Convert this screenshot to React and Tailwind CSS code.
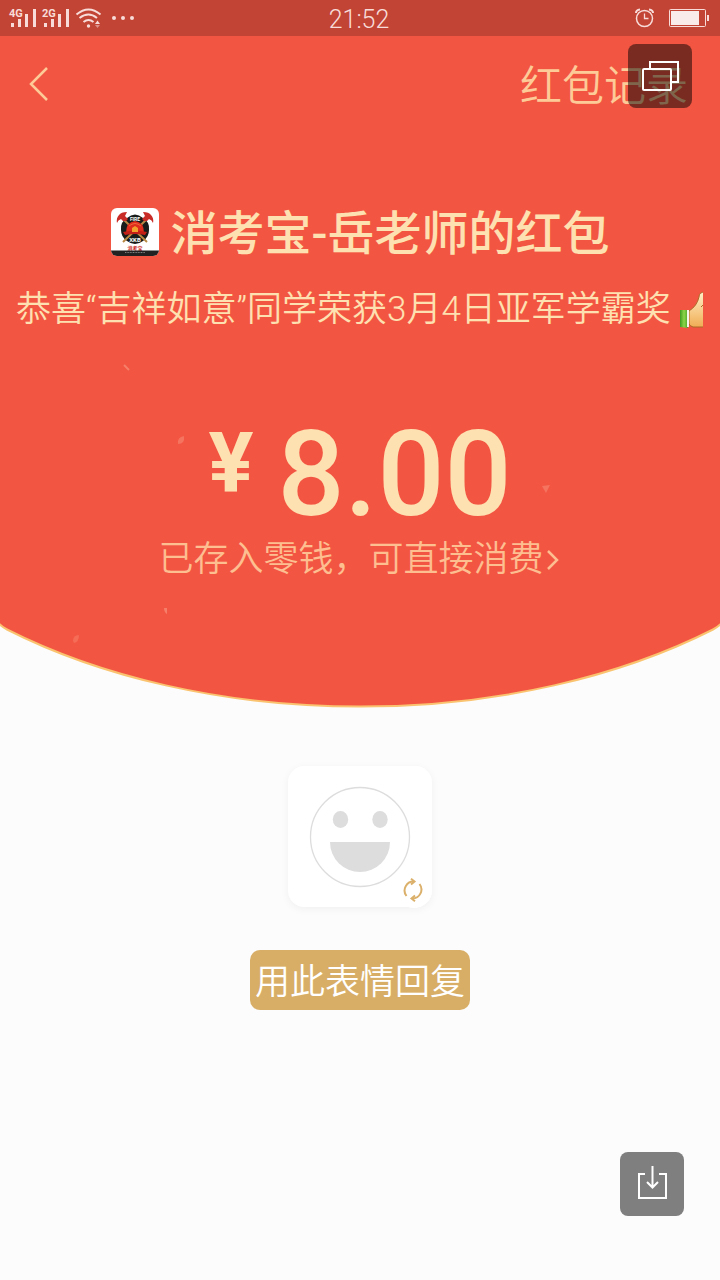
import React from "react";

const StatusBar = () => {
  return (
    <div className="grid h-9 grid-cols-3 items-center bg-[#c24435] pr-2.5 pl-2 text-[#f8dcd9]">
      <div className="flex items-center">
        <svg width="128" height="24" viewBox="8 6 128 24" fill="currentColor" aria-hidden="true">
          <text x="9" y="17" fontSize="11" fontWeight="700">4G</text>
          <path d="M11 23h3v4h-3zM18 19h3v8h-3zM25 14h3v13h-3zM33 9h3v18h-3z" />
          <text x="42" y="17" fontSize="11" fontWeight="700">2G</text>
          <path d="M44 23h3v4h-3zM51 19h3v8h-3zM58 14h3v13h-3zM66 9h3v18h-3z" />
          <g fill="none" stroke="currentColor" strokeWidth="2">
            <path d="M76.500 14.500Q88.500 4.500 100.500 14.500" />
            <path d="M79.500 18Q88.500 11 97 18" />
            <path d="M83.500 22Q88.500 18 93.500 22" />
          </g>
          <circle cx="88.500" cy="26" r="1.700" />
          <path d="M95 24l2.500-3.500 2.500 3.500z" />
          <path d="M95 25l2.500 3 2.500-3z" opacity=".5" />
          <circle cx="114" cy="18" r="2" />
          <circle cx="123" cy="18" r="2" />
          <circle cx="132" cy="18" r="2" />
        </svg>
      </div>
      <time className="pt-1 text-center text-[25px] leading-8 font-light">21:52</time>
      <div className="flex items-center justify-end">
        <svg width="76" height="24" viewBox="634 6 76 24" fill="none" stroke="currentColor" aria-hidden="true">
          <circle cx="644.500" cy="18.500" r="8" strokeWidth="1.500" />
          <path d="M644.500 13.500v5h4" strokeWidth="1.300" />
          <path d="M636 13q0-3 4-3.500M653 13q0-3-4-3.500" strokeWidth="2" />
          <rect x="669.500" y="9.500" width="36" height="17" rx="1" />
          <path d="M671 11h28v14h-28z" fill="#f8ebe9" stroke="none" />
          <path d="M707 15h2v6h-2z" fill="currentColor" stroke="none" />
        </svg>
      </div>
    </div>
  );
};

const Avatar = () => {
  return (
    <svg className="h-12 w-12 shrink-0 rounded-md bg-white" viewBox="0 0 48 48" role="img" aria-label="消考宝">
      <path d="M16 10Q24 3 32 10Q39 14 38 22Q38 29 32 33Q24 39 16 33Q10 29 10 22Q9 14 16 10Z" fill="#181c1a" />
      <path d="M12 11L36 34M36 11L12 34" stroke="#b98a45" strokeWidth="2" />
      <path d="M12 13L10 11Q7 12 6 15Q5 10 8 7Q10 4 16 4L14 8L17 11L15 13ZM36 13L38 11Q41 12 42 15Q43 10 40 7Q38 4 32 4L34 8L31 11L33 13Z" fill="#c92b27" />
      <path d="M15 25Q15 14 24 13Q33 14 33 25Z" fill="#e02c1c" />
      <path d="M12 24Q24 21 36 24L34 27Q24 25 14 27Z" fill="#c41f17" />
      <path d="M21 24v-4l3-2 3 2v4z" fill="#f2a12c" />
      <path d="M18 18Q24 13 30 18" fill="none" stroke="#f06a38" />
      <text x="24" y="13" fontSize="5" fontWeight="700" fill="#fff" textAnchor="middle">FIRE</text>
      <text x="24" y="34" fontSize="6" fontWeight="700" fill="#fff" textAnchor="middle">XKB</text>
      <text x="24" y="42" fontSize="5" fontWeight="700" fill="#c92b27" textAnchor="middle">消考宝</text>
      <path d="M0 42.500h48V48H0z" fill="#222" />
      <path d="M14 44.500h20" stroke="#999" strokeWidth=".8" strokeDasharray="1 .6" />
    </svg>
  );
};

const ThumbsUp = () => {
  return (
    <svg className="h-10 w-6 shrink-0" viewBox="0 0 24 40" aria-hidden="true">
      <defs>
        <linearGradient id="skin" x1="0" y1="0" x2="0" y2="1">
          <stop offset="0" stopColor="#fff0c8" />
          <stop offset="1" stopColor="#f0ad54" />
        </linearGradient>
        <linearGradient id="cuff">
          <stop offset="0" stopColor="#3f9a1e" />
          <stop offset=".5" stopColor="#8bd648" />
          <stop offset="1" stopColor="#48a326" />
        </linearGradient>
      </defs>
      <path d="M10 21Q18 16 20 7Q20 2 26 2V37H14Q11 36 10 34Z" fill="url(#skin)" stroke="#ad6828" />
      <path d="M22 17l3-3" stroke="#ad6828" />
      <path d="M1 20h8v18l-8-1z" fill="url(#cuff)" />
      <path d="M8 20h2v17H8z" fill="#f5f6e9" />
    </svg>
  );
};

const Confetti = () => {
  return (
    <svg className="pointer-events-none absolute inset-0 h-full w-full" viewBox="0 36 720 672" preserveAspectRatio="none" aria-hidden="true">
      <path d="M124 365l5 5" stroke="#f57f68" strokeWidth="2" />
      <path d="M178 444q-1-7 6-8q1 8-6 8z" fill="#f5745f" />
      <path d="M542 486l8-1-4 8z" fill="#f5745f" />
      <path d="M164 608h3v6q-3-2-3-6z" fill="#f57f68" />
      <path d="M73 641q0-6 6-6q0 7-5 8z" fill="#f56c57" />
    </svg>
  );
};

const Packet = () => {
  return (
    <section className="relative text-[#fee1b0]">
      <div className="bg-[#f35543]">
        <header className="flex h-24 items-center justify-between pr-8 pl-6">
          <button type="button" aria-label="返回" className="flex h-12 w-8 items-center">
            <svg width="32" height="40" viewBox="0 0 32 40" fill="none" stroke="#fdcb97" strokeWidth="2.500">
              <path d="M23 4L7 20l16 16" />
            </svg>
          </button>
          <a href="#records" className="pt-1.5 text-[42px] leading-[48px] font-[350] text-[#fdcb97]">
            红包记录
          </a>
        </header>

        <div className="flex items-center justify-center gap-3 pt-[72px]">
          <Avatar />
          <h1 className="pt-1 text-[47px] leading-[52px] font-medium whitespace-nowrap">消考宝-岳老师的红包</h1>
        </div>

        <div className="mx-4 mt-[26px] flex items-center gap-2 overflow-hidden">
          <p className="shrink-0 text-[35px] leading-12 font-[350] whitespace-nowrap">
            恭喜“吉祥如意”同学荣获3月4日亚军学霸奖
          </p>
          <ThumbsUp />
        </div>

        <div className="mt-20 flex items-start justify-center gap-6 font-medium">
          <span className="text-[84px] leading-[100px] font-bold">¥</span>
          <span className="text-[118px] leading-[122px]">8.00</span>
        </div>

        <div className="flex justify-center pb-9">
          <a href="#balance" className="flex items-center text-[35px] leading-12 font-[350] text-[#fdbe90]">
            已存入零钱，可直接消费
            <svg width="18" height="24" viewBox="0 0 18 24" fill="none" stroke="currentColor" strokeWidth="2.500" aria-hidden="true">
              <path d="M4 3l9 9-9 9" />
            </svg>
          </a>
        </div>
      </div>
      <svg className="block h-22 w-full" viewBox="0 0 720 88" preserveAspectRatio="none" aria-hidden="true">
        <path
          d="M-4 -4V0Q0 6 7 9.500A540 317 0 0 0 713 9.500Q720 6 724 0V-4Z"
          fill="#f35543"
          stroke="#fac36f"
          strokeWidth="2"
        />
      </svg>
      <Confetti />
    </section>
  );
};

const Reply = () => {
  return (
    <section className="flex flex-col items-center pt-[58px]">
      <button
        type="button"
        aria-label="更换表情"
        className="relative flex h-[141px] w-36 items-center justify-center rounded-2xl bg-white shadow-[0_2px_8px_rgba(0,0,0,0.05)]"
      >
        <svg width="102" height="102" viewBox="0 0 102 102" fill="#ddd" aria-hidden="true">
          <circle cx="51" cy="51" r="49.500" fill="none" stroke="#ddd" strokeWidth="1.300" />
          <ellipse cx="31.500" cy="33.500" rx="7.700" ry="8.500" />
          <ellipse cx="71" cy="33.500" rx="7.700" ry="8.500" />
          <path d="M21 56h60a30 30 0 0 1-60 0z" />
        </svg>
        <span className="absolute right-0 -bottom-px flex h-9 w-9 items-center justify-center rounded-full bg-white">
          <svg width="24" height="24" viewBox="0 0 24 24" fill="none" stroke="#dbb06a" strokeWidth="2" aria-hidden="true">
            <path d="M4.500 18A9 9 0 0 1 12 3.500M17.500 6A9 9 0 0 1 10 20.500" />
            <path d="M9 .8l3.500 2.700L9 6.500M13 17.500l-3.500 3 3.500 2.700" />
          </svg>
        </span>
      </button>
      <button
        type="button"
        className="mt-[43px] h-15 rounded-[10px] bg-[#d8ae66] px-[5px] pt-1.5 text-[35px] leading-[54px] font-[350] text-white"
      >
        用此表情回复
      </button>
    </section>
  );
};

const App = () => {
  return (
    <main className="relative min-h-screen bg-[#fcfcfc] font-[Roboto,'Noto_Sans_CJK_SC',sans-serif]" lang="zh-CN">
      <StatusBar />
      <Packet />
      <Reply />

      {/* Floating tools */}
      <button
        type="button"
        aria-label="切换窗口"
        className="absolute top-11 right-7 flex h-16 w-16 items-center justify-center rounded-lg bg-black/50"
      >
        <svg width="40" height="34" viewBox="0 0 40 34" fill="none" stroke="#fff" strokeWidth="2" aria-hidden="true">
          <rect x="3" y="10" width="28" height="21" rx="1" />
          <path d="M10 10V3h28v20h-7" />
        </svg>
      </button>
      <button
        type="button"
        aria-label="保存"
        className="absolute right-9 bottom-16 flex h-16 w-16 items-center justify-center rounded-lg bg-[#7f7f7f]"
      >
        <svg width="32" height="36" viewBox="0 0 32 36" fill="none" stroke="#fff" strokeWidth="2" aria-hidden="true">
          <path d="M9 8H3v24h27V8h-7M16.500 0v21M11 16l5.500 5.500L22 16" />
        </svg>
      </button>
    </main>
  );
};

export default App;
